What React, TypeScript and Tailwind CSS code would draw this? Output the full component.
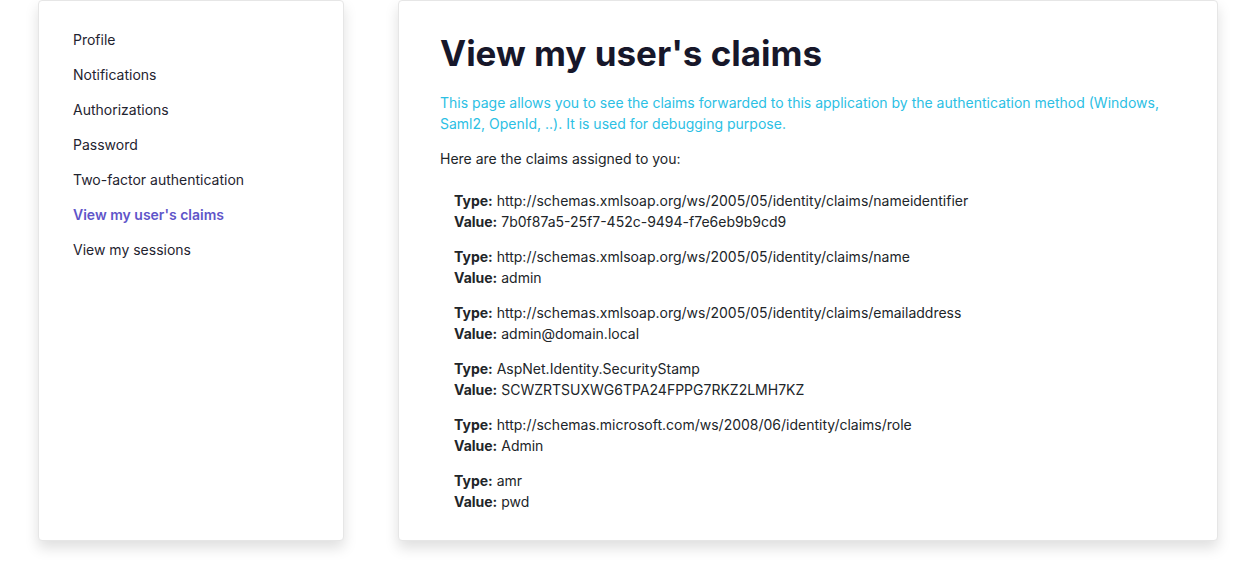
const navItems = [
  "Profile",
  "Notifications",
  "Authorizations",
  "Password",
  "Two-factor authentication",
  "View my user's claims",
  "View my sessions",
];

const claims = [
  {
    type: "http://schemas.xmlsoap.org/ws/2005/05/identity/claims/nameidentifier",
    value: "7b0f87a5-25f7-452c-9494-f7e6eb9b9cd9",
  },
  {
    type: "http://schemas.xmlsoap.org/ws/2005/05/identity/claims/name",
    value: "admin",
  },
  {
    type: "http://schemas.xmlsoap.org/ws/2005/05/identity/claims/emailaddress",
    value: "admin@domain.local",
  },
  {
    type: "AspNet.Identity.SecurityStamp",
    value: "SCWZRTSUXWG6TPA24FPPG7RKZ2LMH7KZ",
  },
  {
    type: "http://schemas.microsoft.com/ws/2008/06/identity/claims/role",
    value: "Admin",
  },
  { type: "amr", value: "pwd" },
];

export default function App() {
  const active = "View my user's claims";

  return (
    <div className="min-h-[562px] bg-white font-['Inter',_'Liberation_Sans',_sans-serif] text-[14px] text-[#212529]">
      <div className="flex items-stretch gap-[54px] pl-[38px] pr-[38px]">
        {/* SIDEBAR */}
        <aside className="w-[306px] shrink-0 rounded-[4px] border border-[#e6e6e6] bg-white pt-[21px] shadow-[0_7px_14px_rgba(0,0,0,0.13)]">
          <ul className="flex flex-col">
            {navItems.map((item) => (
              <li
                key={item}
                className={
                  item === active
                    ? "px-[34px] py-[7px] leading-[21px] font-semibold text-[#5f55c9]"
                    : "px-[34px] py-[7px] leading-[21px] text-[#1f2430]"
                }
              >
                {item}
              </li>
            ))}
          </ul>
        </aside>

        {/* CONTENT */}
        <main className="flex-1 rounded-[4px] border border-[#e6e6e6] bg-white px-[41px] pt-[32px] pb-[28px] shadow-[0_7px_14px_rgba(0,0,0,0.13)]">
          <h1 className="text-[35px] leading-[40px] font-bold text-[#17172a]">
            View my user's claims
          </h1>

          <p className="mt-[19px] leading-[21px] text-[#2cc0e4]">
            This page allows you to see the claims forwarded to this application by the authentication method (Windows,
            Saml2, OpenId, ..). It is used for debugging purpose.
          </p>

          <p className="mt-[14px] leading-[21px]">Here are the claims assigned to you:</p>

          <ul className="mt-[21px] flex flex-col gap-[14px] pl-[14px]">
            {claims.map((claim) => (
              <li key={claim.type} className="leading-[21px]">
                <div>
                  <span className="font-bold">Type:</span> {claim.type}
                </div>
                <div>
                  <span className="font-bold">Value:</span> {claim.value}
                </div>
              </li>
            ))}
          </ul>
        </main>
      </div>
    </div>
  );
}
